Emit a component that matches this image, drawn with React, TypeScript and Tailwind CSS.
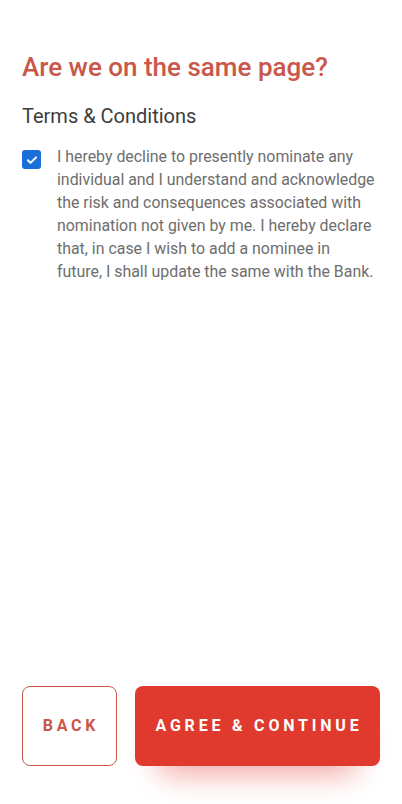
import React from "react";

export default function App() {
  return (
    <div
      className="w-[402px] h-[804px] bg-white flex flex-col px-[22px]"
      style={{ fontFamily: "Roboto, 'Noto Sans', sans-serif" }}
    >
      <h1 className="mt-[50px] text-[26px] leading-[34px] font-medium text-[#c9574a]">
        Are we on the same page?
      </h1>
      <h2 className="mt-[18px] text-[20px] leading-[28px] text-[#3c3c3c]">
        Terms &amp; Conditions
      </h2>
      <div className="mt-[15px] flex items-start">
        <div className="mt-[5px] w-[19px] h-[19px] rounded-[3px] bg-[#1a6fd8] flex items-center justify-center shrink-0">
          <svg width="14" height="14" viewBox="0 0 24 24" fill="none" stroke="white" strokeWidth="3.4" strokeLinecap="round" strokeLinejoin="round">
            <path d="M5 12.5l4.5 4.5L19 7.5" />
          </svg>
        </div>
        <p className="ml-[16px] w-[319px] text-[15.9px] leading-[23px] text-[#6e6e6e]">
          I hereby decline to presently nominate any individual and I understand and acknowledge the risk and consequences associated with nomination not given by me. I hereby declare that, in case I wish to add a nominee in future, I shall update the same with the Bank.
        </p>
      </div>
      <div className="flex-1" />
      <div className="flex gap-[18px] mb-[38px]">
        <button className="w-[95px] h-[80px] rounded-[8px] border border-[#c9574a] text-[#c9574a] font-bold text-[16px] tracking-[3.8px] flex items-center justify-center pl-[3px]">
          BACK
        </button>
        <div className="relative flex-1">
          <div className="absolute left-[20px] right-[20px] top-[30px] h-[60px] rounded-[20px] bg-[#e3392c] opacity-40 blur-[14px]" />
          <button className="relative w-full h-[80px] rounded-[8px] bg-[#e03a2e] text-white font-bold text-[16px] tracking-[3.8px] flex items-center justify-center pl-[3px]">
            AGREE &amp; CONTINUE
          </button>
        </div>
      </div>
    </div>
  );
}
